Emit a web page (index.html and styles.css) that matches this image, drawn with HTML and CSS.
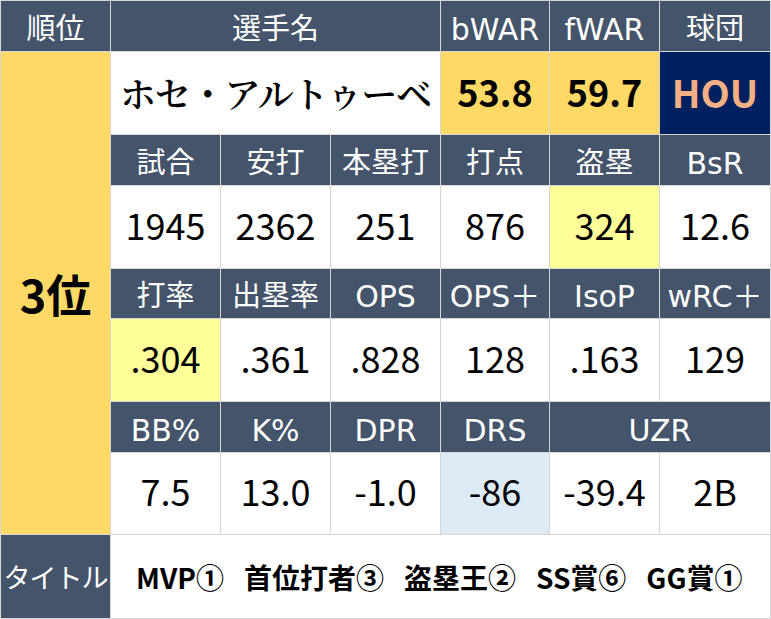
FILE: index.html
```html
<!DOCTYPE html>
<html lang="ja">
<head>
<meta charset="utf-8">
<title>ホセ・アルトゥーベ</title>
<link rel="stylesheet" href="styles.css">
</head>
<body>
<div class="sheet">
  <div class="cell hd">順位</div>
  <div class="cell hd span3">選手名</div>
  <div class="cell hd lat">bWAR</div>
  <div class="cell hd lat">fWAR</div>
  <div class="cell hd">球団</div>

  <div class="cell rank">3位</div>
  <div class="cell name span3">ホセ・アルトゥーベ</div>
  <div class="cell war">53.8</div>
  <div class="cell war">59.7</div>
  <div class="cell team">HOU</div>

  <div class="cell hd">試合</div>
  <div class="cell hd">安打</div>
  <div class="cell hd">本塁打</div>
  <div class="cell hd">打点</div>
  <div class="cell hd">盗塁</div>
  <div class="cell hd lat">BsR</div>

  <div class="cell val">1945</div>
  <div class="cell val">2362</div>
  <div class="cell val">251</div>
  <div class="cell val">876</div>
  <div class="cell val hl-yellow">324</div>
  <div class="cell val">12.6</div>

  <div class="cell hd">打率</div>
  <div class="cell hd">出塁率</div>
  <div class="cell hd lat">OPS</div>
  <div class="cell hd lat">OPS＋</div>
  <div class="cell hd lat">IsoP</div>
  <div class="cell hd lat">wRC＋</div>

  <div class="cell val hl-yellow">.304</div>
  <div class="cell val">.361</div>
  <div class="cell val">.828</div>
  <div class="cell val">128</div>
  <div class="cell val">.163</div>
  <div class="cell val">129</div>

  <div class="cell hd lat">BB%</div>
  <div class="cell hd lat">K%</div>
  <div class="cell hd lat">DPR</div>
  <div class="cell hd lat">DRS</div>
  <div class="cell hd lat span2">UZR</div>

  <div class="cell val">7.5</div>
  <div class="cell val">13.0</div>
  <div class="cell val">-1.0</div>
  <div class="cell val hl-blue">-86</div>
  <div class="cell val">-39.4</div>
  <div class="cell val">2B</div>

  <div class="cell hd title-hd">タイトル</div>
  <div class="cell titles span6">
    <span>MVP①</span>
    <span>首位打者③</span>
    <span>盗塁王②</span>
    <span>SS賞⑥</span>
    <span>GG賞①</span>
  </div>
</div>
</body>
</html>
```

FILE: styles.css
```css
html, body {
  margin: 0;
  padding: 0;
  background: #ffffff;
}

.sheet {
  display: grid;
  grid-template-columns: 109px 109px 109px 109px 108px 109px 110px;
  grid-template-rows: 50px 82px 50px 82px 49px 82px 50px 81px 83px;
  gap: 1px;
  padding: 1px;
  width: 769px;
  background: #d6d6d6;
  font-family: "Noto Sans CJK JP", "Noto Sans", sans-serif;
}

.cell {
  display: flex;
  align-items: center;
  justify-content: center;
  background: #ffffff;
  color: #000000;
  white-space: nowrap;
  overflow: hidden;
}

.span2 { grid-column: span 2; }
.span3 { grid-column: span 3; }
.span6 { grid-column: span 6; }

.hd {
  background: #44546a;
  color: #ffffff;
  font-size: 29px;
  line-height: 1;
}

.hd.lat {
  font-family: "DejaVu Sans", "Noto Sans CJK JP", sans-serif;
  font-size: 30px;
  padding-top: 7px;
}

.rank {
  grid-column: 1;
  grid-row: 2 / 9;
  background: #ffd966;
  font-size: 45px;
  font-weight: 700;
}

.name {
  font-family: "Noto Serif CJK JP", "IPAMincho", "Liberation Serif", "Noto Sans CJK JP", serif;
  font-size: 36px;
  font-weight: 600;
  letter-spacing: -1.2px;
  padding-bottom: 2px;
}

.war {
  background: #ffd966;
  font-size: 36px;
  font-weight: 700;
  padding-bottom: 4px;
}

.team {
  background: #002060;
  color: #f4b084;
  font-size: 38px;
  font-weight: 700;
  padding-bottom: 4px;
}

.val {
  font-size: 36px;
  padding-bottom: 7px;
}

.hl-yellow { background: #ffff99; }
.hl-blue { background: #ddebf7; }

.title-hd {
  font-size: 27px;
  letter-spacing: -1px;
}

.titles {
  justify-content: flex-start;
  gap: 20px;
  padding-left: 25px;
  font-size: 28px;
  font-weight: 700;
}
```
